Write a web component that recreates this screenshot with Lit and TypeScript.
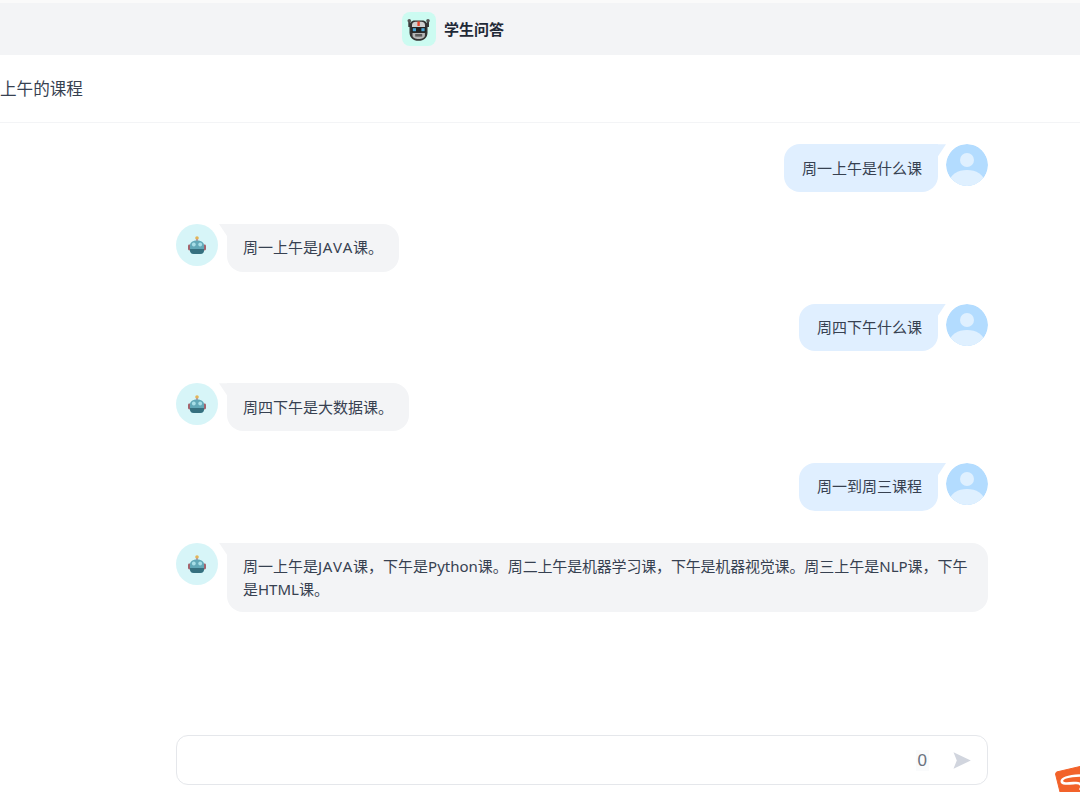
import { LitElement, html, css, svg } from "lit";
import { customElement } from "lit/decorators.js";

const botIcon = svg`<svg width="42" height="42" viewBox="0 0 42 42">
  <circle cx="21" cy="14" r="1.800" fill="#e3b458"/>
  <rect x="20" y="15" width="2" height="2" fill="#c39a9a"/>
  <rect x="12" y="20.500" width="3" height="6" rx="1.400" fill="#a5636c"/>
  <rect x="27" y="20.500" width="3" height="6" rx="1.400" fill="#a5636c"/>
  <path d="M14 21.500c0-3.400 3-5 7-5s7 1.600 7 5v5c0 2.500-2 3.500-4 3.500h-6c-2 0-4-1-4-3.500z" fill="#62a9b8"/>
  <path d="M14 25h14v1.500c0 2.500-2 3.500-4 3.500h-6c-2 0-4-1-4-3.500z" fill="#36707f"/>
  <circle cx="17.800" cy="20.500" r="1.900" fill="#a8dfe7"/>
  <circle cx="24.200" cy="20.500" r="1.900" fill="#a8dfe7"/>
</svg>`;

const userIcon = svg`<svg width="42" height="42" viewBox="0 0 42 42">
  <circle cx="21" cy="21" r="21" fill="#b3dcff"/>
  <circle cx="21" cy="16" r="7" fill="#dff0ff"/>
  <clipPath id="c"><circle cx="21" cy="21" r="21"/></clipPath>
  <ellipse cx="21" cy="37" rx="17" ry="11" fill="#dff0ff" clip-path="url(#c)"/>
</svg>`;

const logoIcon = svg`<svg width="34" height="34" viewBox="0 0 34 34">
  <path d="M7.300 9v6M26 9v6" stroke="#3b3b3b" stroke-width="2" fill="none"/>
  <circle cx="7.300" cy="8.700" r="1.800" fill="#555"/>
  <circle cx="26" cy="8.700" r="1.800" fill="#555"/>
  <path d="M7.500 13c0-2.500 3-4.500 5-4.500h8c2 0 5 2 5 4.500v7.500c0 5-3.500 8.300-9 8.300s-9-3.300-9-8.300z" fill="#333"/>
  <path d="M10 13c0-2 2-3.200 3.500-3.200h6c1.500 0 3.500 1.200 3.500 3.200v2H10z" fill="#cfcfcf"/>
  <rect x="15.400" y="9.500" width="2.400" height="4.500" fill="#e8452c"/>
  <rect x="9.500" y="15" width="14.500" height="5.500" rx="1" fill="#222"/>
  <rect x="10.800" y="16.200" width="3.200" height="3" fill="#4aa8d8"/>
  <rect x="19.400" y="16.200" width="3.200" height="3" fill="#4aa8d8"/>
  <path d="M10.500 21h12.400v2.500c0 2-2.600 3.500-6.200 3.500s-6.200-1.500-6.200-3.500z" fill="#b4b4b4"/>
  <rect x="13.200" y="22" width="7" height="2.600" fill="#5a5a5a"/>
</svg>`;

const messages = [
  { from: "user", text: html`周一上午是什么课` },
  { from: "bot", text: html`周一上午是<span class="wide">JAVA</span>课。` },
  { from: "user", text: html`周四下午什么课` },
  { from: "bot", text: html`周四下午是大数据课。` },
  { from: "user", text: html`周一到周三课程` },
  {
    from: "bot",
    text: html`周一上午是<span class="wide">JAVA</span>课，下午是Python课。<span class="tight">周二上午是机器学习课，下午是机器视觉课。</span>周三上午是NLP课，下午是HTML课。`,
  },
];

@customElement("app-root")
export class AppRoot extends LitElement {
  static styles = css`
    :host {
      display: flex;
      flex-direction: column;
      position: relative;
      height: 792px;
      overflow: hidden;
      background: #fff;
      color: #374151;
      font-family: "Noto Sans", "Noto Sans CJK SC", sans-serif;
      font-size: 15px;
      line-height: 23px;
      font-kerning: none;
    }
    .wide { letter-spacing: 0.7px; }
    .tight { letter-spacing: -0.18px; }
    .header {
      border-top: 3px solid #fafafa;
      height: 55px;
      flex: none;
      display: flex;
      align-items: center;
      gap: 8px;
      padding-left: 402px;
      background: #f3f4f6;
      box-sizing: border-box;
    }
    .logo {
      width: 34px;
      height: 34px;
      border-radius: 8px;
      background: #ccfbf1;
    }
    .logo svg, .avatar svg { display: block; }
    .app-name {
      font-size: 15px;
      font-weight: 700;
      color: #1f2937;
    }
    .subbar {
      height: 68px;
      flex: none;
      box-sizing: border-box;
      display: flex;
      align-items: center;
      border-bottom: 1px solid #f3f4f6;
      font-size: 16.600px;
      color: #374151;
    }
    .chat {
      flex: 1;
      margin: 0 92px 0 176px;
      padding-top: 21.200px;
      display: flex;
      flex-direction: column;
      gap: 32px;
    }
    .row {
      display: flex;
      align-items: flex-start;
    }
    .row.user { justify-content: flex-end; }
    .avatar {
      flex: none;
      width: 42px;
      height: 42px;
      border-radius: 50%;
      overflow: hidden;
    }
    .bot .avatar { background: #d7f5f8; margin-right: 9px; }
    .bubble {
      position: relative;
      box-sizing: border-box;
      min-height: 47.700px;
      padding: 12.500px 16px 11px;
      border-radius: 16px;
    }
    .user .bubble {
      background: #e0efff;
      border-top-right-radius: 0;
      margin-right: 8px;
      padding-left: 18px;
    }
    .bot .bubble {
      background: #f3f4f6;
      border-top-left-radius: 0;
    }
    .tail {
      position: absolute;
      top: 0;
      width: 8px;
      height: 12px;
    }
    .user .tail { right: -8px; background: #e0efff; clip-path: polygon(0 0, 100% 0, 0 100%); }
    .bot .tail { left: -8px; background: #f3f4f6; clip-path: polygon(0 0, 100% 0, 100% 100%); }
    .composer {
      position: absolute;
      left: 176px;
      top: 735px;
      width: 812px;
      height: 50px;
      box-sizing: border-box;
      border: 1px solid #e5e7eb;
      border-radius: 12px;
      display: flex;
      align-items: center;
      justify-content: flex-end;
      padding-right: 16px;
    }
    .count {
      font-family: "Liberation Sans", sans-serif;
      font-size: 17px;
      line-height: 21px;
      color: #6b7280;
      background: #fafbfc;
      padding: 0 2px;
      margin-right: 24px;
    }
    .send { display: block; }
    .ime {
      position: absolute;
      left: 1055px;
      top: 766px;
    }
  `;

  render() {
    return html`
      <div class="header">
        <div class="logo">${logoIcon}</div>
        <div class="app-name">学生问答</div>
      </div>
      <div class="subbar">上午的课程</div>
      <div class="chat">
        ${messages.map((m) =>
          m.from === "user"
            ? html`<div class="row user">
                <div class="bubble"><span class="tail"></span>${m.text}</div>
                <div class="avatar">${userIcon}</div>
              </div>`
            : html`<div class="row bot">
                <div class="avatar">${botIcon}</div>
                <div class="bubble"><span class="tail"></span>${m.text}</div>
              </div>`
        )}
      </div>
      <div class="composer">
        <span class="count">0</span>
        <svg class="send" width="18" height="17" viewBox="0 0 18 17">
          <path d="M0.500 0.300 17.800 8.500 0.500 16.700 3.800 8.500z" fill="#d1d5de"/>
        </svg>
      </div>
      <svg class="ime" width="32" height="28" viewBox="0 0 32 28">
        <path d="M1.500 6 25 0.500 32 28H5.500L0.500 8z" fill="#f2622a" stroke="#f2622a" stroke-linejoin="round"/>
        <path d="M25 9.500C16 10 7 11.500 6.800 15C6.600 18.500 14 17.500 20 17C26 16.500 28 20 25 24" stroke="#fff" stroke-width="2.600" fill="none"/>
      </svg>
    `;
  }
}
